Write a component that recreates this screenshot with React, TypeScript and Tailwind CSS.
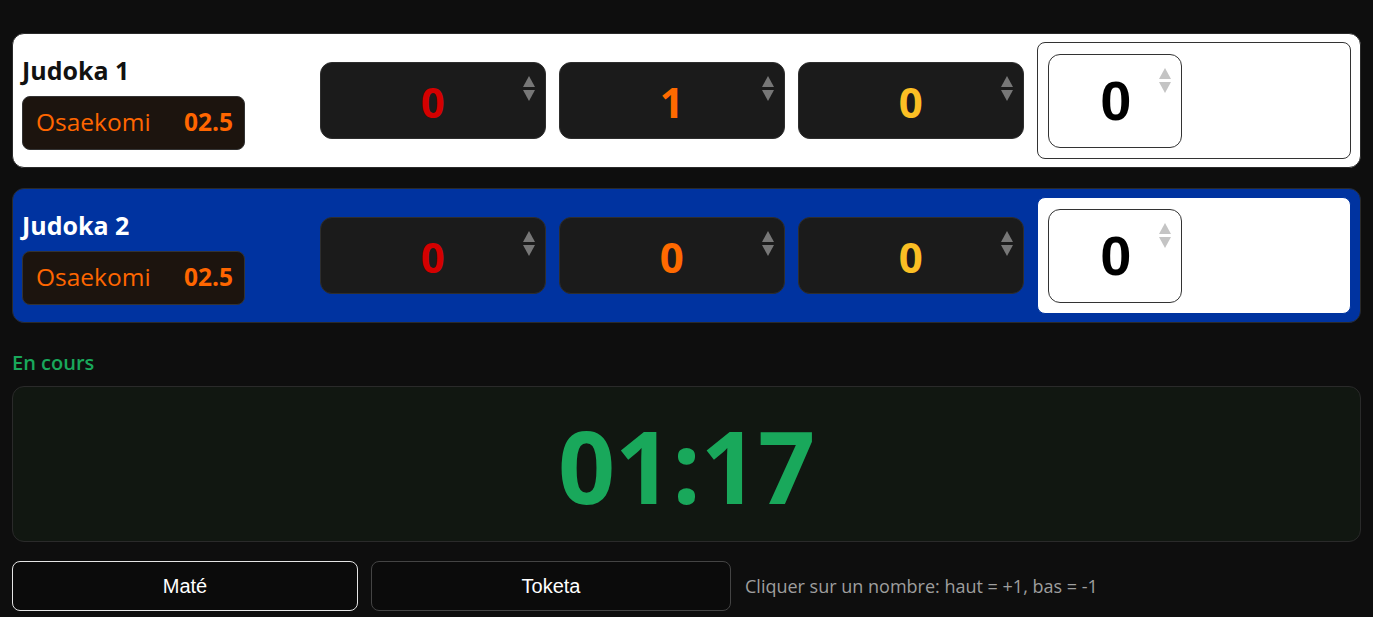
import React from "react";

const SANS = { fontFamily: '"Open Sans", "Noto Sans", sans-serif' };
const ARIAL = { fontFamily: '"Liberation Sans", Arial, sans-serif' };

function Spinner({ light }: { light?: boolean }) {
  const c = light ? "#c4c4c4" : "#777777";
  return (
    <svg width="12" height="25" viewBox="0 0 12 25" className="absolute top-[13px] right-[10px]">
      <polygon points="6,0 12,11 0,11" fill={c} />
      <polygon points="0,14 12,14 6,25" fill={c} />
    </svg>
  );
}

function ScoreBox({ value, color }: { value: string; color: string }) {
  return (
    <div className="relative h-[77px] rounded-[12px] border border-[#2e2e2e] bg-[#1b1b1b] flex items-center justify-center">
      <span className={`text-[42px] font-bold leading-none pt-[2px] ${color}`} style={SANS}>
        {value}
      </span>
      <Spinner />
    </div>
  );
}

function Row({ name, blue, scores }: { name: string; blue?: boolean; scores: string[] }) {
  return (
    <div
      className={`h-[135px] rounded-[12px] border px-[9px] py-[8px] grid grid-cols-[1.26fr_1fr_1fr_1fr_1.39fr] gap-[13px] items-center ${
        blue ? "bg-[#0033a0] border-[#2a2a2a]" : "bg-white border-[#2a2a2a]"
      }`}
    >
      <div className="flex flex-col gap-[10px] pt-[2px]">
        <div className={`text-[25px] font-bold leading-8 ${blue ? "text-white" : "text-[#111]"}`} style={SANS}>
          {name}
        </div>
        <div
          className="w-[223px] h-[54px] rounded-[8px] border border-[#333] bg-[#1c140e] flex items-center justify-between pl-[13px] pr-[11px]"
          style={SANS}
        >
          <span className="text-[24.5px] text-[#ff6600]">Osaekomi</span>
          <span className="text-[24.5px] font-bold text-[#ff6600]">02.5</span>
        </div>
      </div>
      <ScoreBox value={scores[0]} color="text-[#d40000]" />
      <ScoreBox value={scores[1]} color="text-[#ff6a00]" />
      <ScoreBox value={scores[2]} color="text-[#fbbf24]" />
      <div
        className={`self-stretch rounded-[8px] border bg-white p-[10px] flex items-center ${
          blue ? "border-[#0033a0]" : "border-[#333]"
        }`}
      >
        <div className="relative w-[134px] h-[94px] rounded-[12px] border border-[#333] bg-white flex items-center justify-center">
          <span className="text-[56px] font-bold leading-none text-black pl-[2px]" style={ARIAL}>
            0
          </span>
          <Spinner light />
        </div>
      </div>
    </div>
  );
}

export default function App() {
  return (
    <div className="min-h-screen bg-[#0e0e0e] px-3 pt-[33px]" style={SANS}>
      <div className="flex flex-col gap-5">
        <Row name="Judoka 1" scores={["0", "1", "0"]} />
        <Row name="Judoka 2" blue scores={["0", "0", "0"]} />
      </div>
      <div className="mt-[28px] mb-[11px] text-[20px] leading-6 font-semibold text-[#19a85b]">En cours</div>
      <div className="h-[156px] rounded-[12px] border border-[#2a2a2a] bg-[#111711] flex items-center justify-center">
        <span className="text-[100px] font-bold leading-none text-[#19a85b] pt-[2px]">01:17</span>
      </div>
      <div className="mt-[19px] flex items-center gap-[13px]">
        <button
          className="w-[346px] h-[50px] rounded-[8px] border border-[#e5e5e5] bg-[#0b0b0b] text-white text-[20px]"
          style={ARIAL}
        >
          Maté
        </button>
        <button
          className="w-[360px] h-[50px] rounded-[8px] border border-[#444] bg-[#0b0b0b] text-white text-[20px]"
          style={ARIAL}
        >
          Toketa
        </button>
        <span className="ml-px text-[18px] text-[#9e9e9e]">Cliquer sur un nombre: haut = +1, bas = -1</span>
      </div>
    </div>
  );
}
